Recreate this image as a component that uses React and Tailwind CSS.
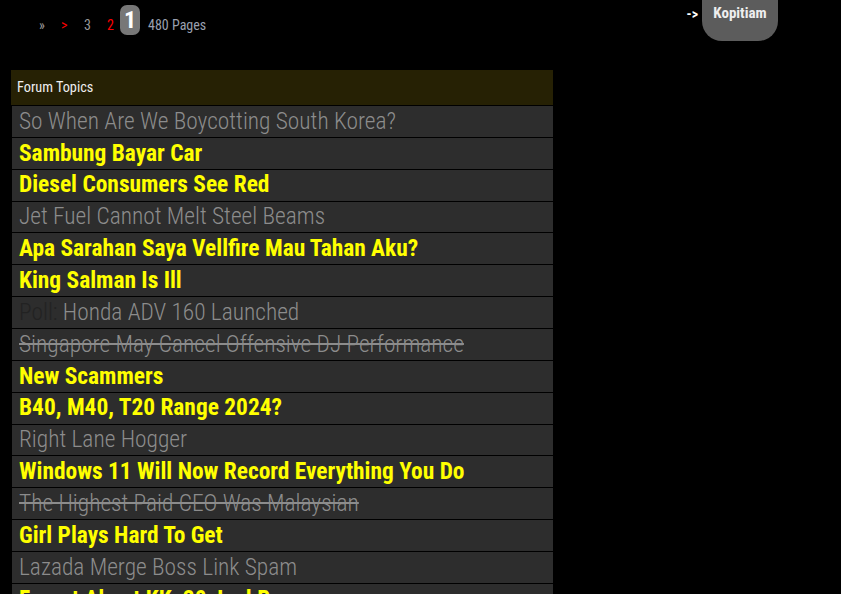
import React from 'react';

const topics = [
  { title: 'So When Are We Boycotting South Korea?', kind: 'read' },
  { title: 'Sambung Bayar Car', kind: 'new' },
  { title: 'Diesel Consumers See Red', kind: 'new' },
  { title: 'Jet Fuel Cannot Melt Steel Beams', kind: 'read' },
  { title: 'Apa Sarahan Saya Vellfire Mau Tahan Aku?', kind: 'new' },
  { title: 'King Salman Is Ill', kind: 'new' },
  { title: 'Honda ADV 160 Launched', kind: 'read', poll: true },
  { title: 'Singapore May Cancel Offensive DJ Performance', kind: 'closed' },
  { title: 'New Scammers', kind: 'new' },
  { title: 'B40, M40, T20 Range 2024?', kind: 'new' },
  { title: 'Right Lane Hogger', kind: 'read' },
  { title: 'Windows 11 Will Now Record Everything You Do', kind: 'new' },
  { title: 'The Highest Paid CEO Was Malaysian', kind: 'closed' },
  { title: 'Girl Plays Hard To Get', kind: 'new' },
  { title: 'Lazada Merge Boss Link Spam', kind: 'read' },
  { title: 'Forget About KK, 20 Jual Baru', kind: 'new' },
];

const textClass = {
  new: 'font-bold text-[#ffff00]',
  read: 'font-light text-[#8c8c8c]',
  closed: 'font-light text-[#8c8c8c] line-through',
};

function TopicRow({ topic }) {
  return (
    <div className="h-[30.87px] mb-px bg-[#2d2d2d] ml-px flex items-center px-[7px] overflow-hidden">
      <a href="#" className={`whitespace-nowrap text-[23.4px] leading-none ${textClass[topic.kind]}`}>
        {topic.poll && <span className="text-[#222222]">Poll: </span>}
        {topic.title}
      </a>
    </div>
  );
}

export default function App() {
  return (
    <div className="min-h-screen bg-black text-white font-['Roboto_Condensed','Roboto',sans-serif] overflow-hidden">
      {/* Top bar: pagination + board link */}
      <div className="flex items-start h-[70px]">
        <div className="flex items-end pl-[39px] pt-[5px] text-[14px] leading-none text-[#999999]">
          <a href="#" className="w-[22px] pb-[3px]">»</a>
          <a href="#" className="w-[23px] pb-[3px] text-[#ff0000]">&gt;</a>
          <a href="#" className="w-[23px] pb-[3px]">3</a>
          <a href="#" className="w-[13px] pb-[3px] text-[#ff0000]">2</a>
          <span className="w-[20px] h-[30px] rounded-[7px] bg-[#777777] text-white font-bold text-[24px] flex items-center justify-center">1</span>
          <span className="ml-[8px] pb-[3px] text-[#9aa0b0]">480 Pages</span>
        </div>
        <div className="ml-auto mr-[63px] flex items-start">
          <span className="mt-[4px] mr-[4px] text-[14px] font-bold text-white">-&gt;</span>
          <a href="#" className="w-[76px] h-[41px] bg-[#5c5c5c] rounded-b-[20px] flex justify-center pt-[2px] text-[15px] font-bold text-[#eeeeee]">
            Kopitiam
          </a>
        </div>
      </div>

      {/* Forum topics table */}
      <div className="ml-[11px] w-[542px]">
        <div className="h-[35px] mb-px bg-[#262104] flex items-center px-[6px] text-[14.3px] text-[#eeeeee]">
          Forum Topics
        </div>
        {topics.map((t) => (
          <TopicRow key={t.title} topic={t} />
        ))}
      </div>
    </div>
  );
}
